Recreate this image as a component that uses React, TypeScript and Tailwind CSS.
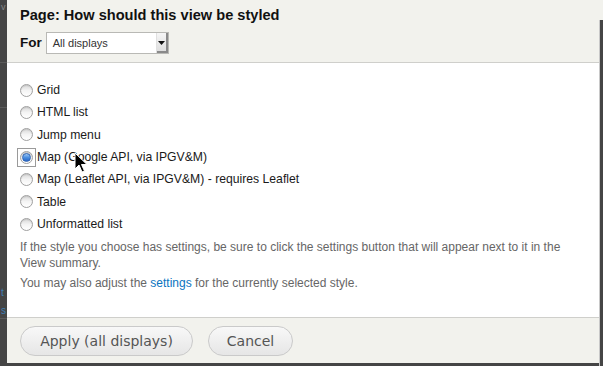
import React from "react";

const options = [
  "Grid",
  "HTML list",
  "Jump menu",
  "Map (Google API, via IPGV&M)",
  "Map (Leaflet API, via IPGV&M) - requires Leaflet",
  "Table",
  "Unformatted list",
];

function Radio({ checked }: { checked: boolean }) {
  return (
    <span className="relative flex h-[13px] w-[13px] items-center justify-center rounded-full border border-[#a0a0a0] bg-gradient-to-b from-[#d8d8d8] via-[#f4f4f4] to-white shadow-[inset_0_1px_1px_rgba(0,0,0,0.1)]">
      {checked && (
        <span className="h-[9px] w-[9px] rounded-full border border-[#2f64b3] bg-gradient-to-b from-[#9cc7f5] via-[#4b8fe0] to-[#2a67c8]" />
      )}
    </span>
  );
}

export default function App() {
  return (
    <div
      className="relative flex h-[366px] w-[603px] overflow-hidden bg-[#454545]"
      style={{ fontFamily: '"Liberation Sans", Arial, sans-serif' }}
    >
      {/* left strip */}
      <div className="relative w-[7px] shrink-0 overflow-hidden">
        <div className="absolute left-0 top-[62px] h-px w-full bg-[#5a5a5a]" />
        <div className="absolute left-0 top-[107px] h-px w-full bg-[#5a5a5a]" />
        <div className="absolute left-0 top-[318px] h-px w-full bg-[#5a5a5a]" />
        <span className="absolute left-[1px] top-[3px] text-[9px] leading-none text-[#888]">v</span>
        <span className="absolute left-[1px] top-[288px] text-[10px] leading-none text-[#3f7fb5]">t</span>
        <span className="absolute left-[1px] top-[306px] text-[10px] leading-none text-[#3f7fb5]">s</span>
      </div>

      {/* dialog */}
      <div className="flex h-[363px] w-[592px] shrink-0 flex-col">
        <div className="flex h-[63px] shrink-0 flex-col border-b border-[#cfcfcb] bg-[#f2f2ed] pl-[13px]">
          <div className="mt-[6px] text-[14.6px] font-bold leading-[18px] text-[#111]">
            Page: How should this view be styled
          </div>
          <div className="mt-[8px] flex items-center">
            <span className="text-[13.5px] font-bold text-[#111]">For</span>
            <div className="ml-[4px] flex h-[22px] w-[123px] items-stretch border border-[#b9b9b5] bg-white">
              <span className="flex flex-1 items-center pl-[6px] text-[11px] text-[#333]">All displays</span>
              <span className="flex w-[12px] items-center justify-center border-l border-[#e0e0e0] bg-gradient-to-b from-[#f6f6f6] to-[#dcdcdc] shadow-[inset_-2px_-2px_0_#8a8a8a]">
                <svg width="7" height="4" viewBox="0 0 7 4" className="mb-[1px] mr-[1px]">
                  <path d="M0 0h7L3.5 4z" fill="#111" />
                </svg>
              </span>
            </div>
          </div>
        </div>

        <div className="flex flex-1 flex-col bg-white pl-[13px] pt-[16px]">
          {options.map((o, i) => (
            <div key={o} className="flex h-[22.33px] items-center">
              <span
                className={
                  i === 3
                    ? "-ml-[3px] flex h-[19px] w-[19px] items-center justify-center border border-[#9a9a9a]"
                    : "flex h-[13px] w-[13px] items-center justify-center"
                }
              >
                <Radio checked={i === 3} />
              </span>
              <span className={(i === 3 ? "ml-[1px]" : "ml-[4px]") + " text-[12.2px] text-[#1a1a1a]"}>{o}</span>
            </div>
          ))}
          <div className="mt-[4px] w-[550px] text-[12px] leading-[16px] text-[#666]">
            <p>
              If the style you choose has settings, be sure to click the settings button that will appear next to it in the View summary.
            </p>
            <p className="mt-[4px]">
              You may also adjust the <span className="text-[#0a74c0]">settings</span> for the currently selected style.
            </p>
          </div>
        </div>

        <div
          className="flex h-[46px] shrink-0 items-center gap-[15px] border-t border-[#cfcfcb] bg-[#f2f2ed] pl-[13px] pt-[1px]"
          style={{ fontFamily: '"DejaVu Sans", Verdana, sans-serif' }}
        >
          <button className="flex h-[30px] w-[173px] items-center justify-center rounded-full border border-[#cacaca] bg-gradient-to-b from-[#f8f8f8] to-[#e6e6e6] text-[14px] text-[#555]">
            Apply (all displays)
          </button>
          <button className="flex h-[30px] w-[85px] items-center justify-center rounded-full border border-[#cacaca] bg-gradient-to-b from-[#f8f8f8] to-[#e6e6e6] text-[14px] text-[#555]">
            Cancel
          </button>
        </div>
      </div>

      {/* right strip */}
      <div className="flex w-[4px] shrink-0 flex-col">
        <div className="h-[20px] bg-[#f2f2ed]" />
        <div className="flex-1 border-l border-[#c8c8c8] bg-[#454545]" />
      </div>

      {/* mouse cursor */}
      <svg className="absolute left-[74px] top-[152px]" width="14" height="21" viewBox="0 0 14 21">
        <path d="M1 1v16l4-4 3 7 2.5-1-3-6.5H13z" fill="#000" stroke="#fff" strokeWidth="1" strokeLinejoin="round" />
      </svg>
    </div>
  );
}
